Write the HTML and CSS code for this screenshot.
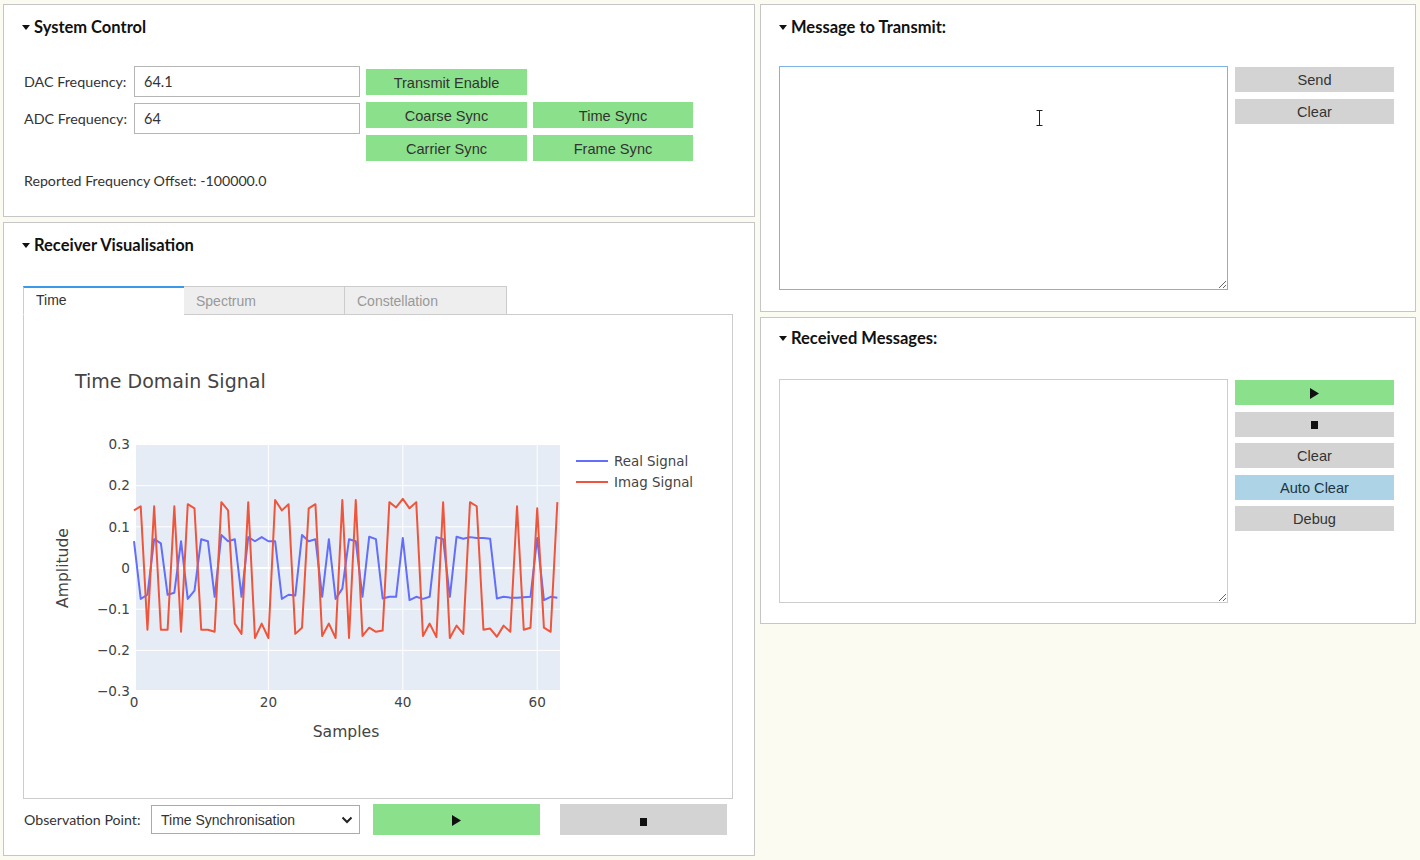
FILE: index.html
```html
<!DOCTYPE html>
<html>
<head>
<meta charset="utf-8">
<link rel="stylesheet" href="styles.css">
</head>
<body>
<div class="col left">
  <section class="panel sys">
    <h2 class="ph"><span class="tri"></span>System Control</h2>
    <div class="sys-body">
      <div class="fields">
        <label class="lbl">DAC Frequency:</label><input class="inp" value="64.1">
        <label class="lbl">ADC Frequency:</label><input class="inp" value="64">
      </div>
      <div class="btn-grid">
        <button class="btn green">Transmit Enable</button><span></span>
        <button class="btn green">Coarse Sync</button><button class="btn green">Time Sync</button>
        <button class="btn green">Carrier Sync</button><button class="btn green">Frame Sync</button>
      </div>
    </div>
    <p class="offset">Reported Frequency Offset: -100000.0</p>
  </section>

  <section class="panel recv">
    <h2 class="ph"><span class="tri"></span>Receiver Visualisation</h2>
    <div class="tabs">
      <div class="tab active">Time</div>
      <div class="tab">Spectrum</div>
      <div class="tab">Constellation</div>
    </div>
    <div class="tab-content">
      <svg class="chart" width="708" height="483" viewBox="24 315 708 483">
        <text class="c-title" x="75" y="388">Time Domain Signal</text>
        <rect x="134" y="444" width="426" height="247" fill="#e5ecf6"/>
        <g stroke="#fff" stroke-width="1">
          <line x1="268.4" y1="444" x2="268.4" y2="691"/>
          <line x1="402.8" y1="444" x2="402.8" y2="691"/>
          <line x1="537.2" y1="444" x2="537.2" y2="691"/>
          <line x1="134" y1="444.5" x2="560" y2="444.5"/>
          <line x1="134" y1="485.7" x2="560" y2="485.7"/>
          <line x1="134" y1="526.8" x2="560" y2="526.8"/>
          <line x1="134" y1="609.2" x2="560" y2="609.2"/>
          <line x1="134" y1="650.4" x2="560" y2="650.4"/>
          <line x1="134" y1="690.5" x2="560" y2="690.5"/>
          <line x1="134" y1="568" x2="560" y2="568" stroke-width="2"/>
          <line x1="135" y1="444" x2="135" y2="691" stroke-width="2"/>
        </g>
        <g transform="translate(134 568) scale(6.72 -411.7)" fill="none" stroke-width="2" stroke-linejoin="round">
          <polyline vector-effect="non-scaling-stroke" stroke="#636efa" points="0,0.065 1,-0.075 2,-0.065 3,0.07 4,0.06 5,-0.065 6,-0.06 7,0.065 8,-0.075 9,-0.055 10,0.07 11,0.065 12,-0.07 13,0.08 14,0.065 15,0.07 16,-0.07 17,0.075 18,0.065 19,0.075 20,0.065 21,0.065 22,-0.075 23,-0.065 24,-0.067 25,0.08 26,0.065 27,0.07 28,-0.07 29,0.07 30,-0.075 31,-0.05 32,0.07 33,0.065 34,-0.07 35,0.076 36,0.07 37,-0.074 38,-0.07 39,-0.07 40,0.073 41,-0.078 42,-0.07 43,-0.075 44,-0.07 45,0.075 46,0.07 47,-0.07 48,0.076 49,0.071 50,0.075 51,0.073 52,0.073 53,0.071 54,-0.074 55,-0.07 56,-0.072 57,-0.072 58,-0.071 59,-0.07 60,0.073 61,-0.078 62,-0.07 63,-0.072"/>
          <polyline vector-effect="non-scaling-stroke" stroke="#ef553b" points="0,0.14 1,0.15 2,-0.15 3,0.15 4,-0.15 5,-0.15 6,0.15 7,-0.155 8,0.155 9,0.145 10,-0.15 11,-0.15 12,-0.155 13,0.16 14,0.14 15,-0.135 16,-0.16 17,0.16 18,-0.17 19,-0.135 20,-0.17 21,0.165 22,0.14 23,0.155 24,-0.16 25,-0.145 26,0.145 27,0.155 28,-0.165 29,-0.135 30,-0.17 31,0.165 32,-0.17 33,0.165 34,-0.165 35,-0.145 36,-0.155 37,-0.152 38,0.16 39,0.147 40,0.168 41,0.145 42,0.16 43,-0.165 44,-0.135 45,-0.168 46,0.16 47,-0.17 48,-0.14 49,-0.16 50,0.16 51,0.15 52,-0.15 53,-0.147 54,-0.167 55,-0.14 56,-0.155 57,0.15 58,-0.15 59,-0.145 60,0.145 61,-0.145 62,-0.155 63,0.16"/>
        </g>
        <g class="c-tick" text-anchor="end">
          <text x="130" y="449">0.3</text>
          <text x="130" y="490">0.2</text>
          <text x="130" y="531.5">0.1</text>
          <text x="130" y="572.5">0</text>
          <text x="130" y="614">−0.1</text>
          <text x="130" y="655">−0.2</text>
          <text x="130" y="696">−0.3</text>
        </g>
        <g class="c-tick" text-anchor="middle">
          <text x="134" y="707">0</text>
          <text x="268.4" y="707">20</text>
          <text x="402.8" y="707">40</text>
          <text x="537.2" y="707">60</text>
        </g>
        <text class="c-axis" x="346" y="737" text-anchor="middle">Samples</text>
        <text class="c-axis" transform="translate(63 568) rotate(-90)" text-anchor="middle" dy="0.35em">Amplitude</text>
        <line x1="576" y1="461" x2="608" y2="461" stroke="#636efa" stroke-width="2"/>
        <line x1="576" y1="482" x2="608" y2="482" stroke="#ef553b" stroke-width="2"/>
        <text class="c-leg" x="614" y="466">Real Signal</text>
        <text class="c-leg" x="614" y="487">Imag Signal</text>
      </svg>
    </div>
    <div class="obs-row">
      <span class="lbl obs-lbl">Observation Point:</span>
      <div class="select">
        <span>Time Synchronisation</span>
        <svg width="12" height="8" viewBox="0 0 12 8"><path d="M1.5 1.5 L6 6 L10.5 1.5" fill="none" stroke="#222" stroke-width="2"/></svg>
      </div>
      <button class="btn green big play-btn"><svg width="9" height="11" viewBox="0 0 9 11"><path d="M0 0 L9 5.5 L0 11 Z" fill="#111"/></svg></button>
      <button class="btn gray big stop-btn"><svg width="7" height="8" viewBox="0 0 7 8"><rect width="7" height="8" fill="#111"/></svg></button>
    </div>
  </section>
</div>

<div class="col right">
  <section class="panel msg">
    <h2 class="ph"><span class="tri"></span>Message to Transmit:</h2>
    <div class="msg-body">
      <div class="ta-wrap">
        <textarea class="ta focus"></textarea>
        <svg class="ibeam" width="7" height="16" viewBox="0 0 7 16"><path d="M0.5 0.5 H6.5 M3.5 0.5 V15.5 M0.5 15.5 H6.5" fill="none" stroke="#222" stroke-width="1"/></svg>
      </div>
      <div class="side-btns">
        <button class="btn gray">Send</button>
        <button class="btn gray">Clear</button>
      </div>
    </div>
  </section>

  <section class="panel rmsg">
    <h2 class="ph"><span class="tri"></span>Received Messages:</h2>
    <div class="msg-body rbody">
      <textarea class="ta"></textarea>
      <div class="side-btns rbtns">
        <button class="btn green"><svg width="9" height="11" viewBox="0 0 9 11"><path d="M0 0 L9 5.5 L0 11 Z" fill="#111"/></svg></button>
        <button class="btn gray"><svg width="7" height="8" viewBox="0 0 7 8"><rect width="7" height="8" fill="#111"/></svg></button>
        <button class="btn gray">Clear</button>
        <button class="btn blue">Auto Clear</button>
        <button class="btn gray">Debug</button>
      </div>
    </div>
  </section>
</div>
</body>
</html>
```

FILE: styles.css
```css
* { box-sizing: border-box; }
html, body { margin: 0; }
body {
  width: 1420px;
  height: 860px;
  overflow: hidden;
  background: #fbfbf1;
  padding: 4px 0 0 3px;
  display: flex;
  gap: 5px;
  font-family: "Lato", "Open Sans", sans-serif;
  color: #333;
}
.col { display: flex; flex-direction: column; gap: 5px; }
.left { width: 752px; }
.right { width: 656px; }

.panel {
  background: #fff;
  border: 1px solid #c6c6c6;
  padding: 12px 0 0 18px;
}
.sys { height: 213px; }
.recv { height: 634px; }
.msg { height: 308px; }
.rmsg { height: 307px; padding-top: 10px; }

.ph {
  margin: 0;
  font: 700 16.5px/20px "Lato", "Open Sans", sans-serif;
  color: #111;
  display: flex;
  align-items: center;
  gap: 4px;
}
.tri {
  width: 0; height: 0;
  border-left: 4px solid transparent;
  border-right: 4px solid transparent;
  border-top: 5px solid #111;
}

.lbl {
  font: 400 14.3px/20px "Lato", sans-serif;
  color: #333;
}

.sys-body { display: flex; margin: 29px 0 0 2px; }
.fields {
  display: grid;
  grid-template-columns: 110px 226px;
  grid-auto-rows: 31px;
  row-gap: 6px;
  align-items: center;
}
.inp {
  height: 31px;
  width: 226px;
  border: 1px solid #b5b5b5;
  padding: 0 9px;
  font: 400 14.5px "Lato", sans-serif;
  color: #333;
  background: #fff;
  outline: none;
}
.btn-grid {
  display: grid;
  grid-template-columns: 161px 160px;
  grid-auto-rows: 26px;
  column-gap: 6px;
  row-gap: 7px;
  margin: 3px 0 0 6px;
}
.btn {
  border: none;
  margin: 0;
  padding: 1px 0 0;
  font: 400 14.6px "Liberation Sans", Arial, sans-serif;
  color: #333;
  display: flex;
  align-items: center;
  justify-content: center;
}
.green { background: #8be18b; }
.gray { background: #d3d3d3; }
.blue { background: #acd3e6; color: #234; }

.offset {
  margin: 10px 0 0 2px;
  font: 400 14.2px/20px "Lato", sans-serif;
  color: #333;
}

/* tabs */
.tabs { display: flex; margin: 31px 0 -1px 1px; position: relative; z-index: 1; }
.tab {
  height: 29px;
  padding: 4px 0 0 12px;
  font: 400 14px/20px "Liberation Sans", Arial, sans-serif;
  color: #999;
  background: #eee;
  border: 1px solid #ccc;
  border-left: none;
}
.tab:nth-child(1) { width: 161px; }
.tab:nth-child(2) { width: 161px; }
.tab:nth-child(3) { width: 162px; }
.tab.active {
  background: #fff;
  color: #333;
  border-top: 2px solid #3c98e8;
  border-left: 1px solid #ccc;
  border-right: none;
  border-bottom: 1px solid #fff;
  padding-top: 2px;
}
.tab-content {
  width: 710px;
  height: 485px;
  margin-left: 1px;
  border: 1px solid #ccc;
  background: #fff;
}
.chart { display: block; }
.c-title { font: 400 19px "DejaVu Sans", Verdana, sans-serif; fill: #444; }
.c-tick text { font: 400 13.6px "DejaVu Sans", Verdana, sans-serif; fill: #444; }
.c-leg { font: 400 13.4px "DejaVu Sans", Verdana, sans-serif; fill: #444; }
.c-axis { font: 400 15.6px "DejaVu Sans", Verdana, sans-serif; fill: #444; }

.obs-row {
  display: flex;
  align-items: center;
  height: 31px;
  margin: 5px 0 0 2px;
}
.obs-lbl { width: 127px; font-size: 14.2px; }
.select {
  width: 209px;
  height: 29px;
  border: 1px solid #aaa;
  background: #fff;
  display: flex;
  align-items: center;
  justify-content: space-between;
  padding: 0 6px 0 9px;
  font: 400 14px "Liberation Sans", Arial, sans-serif;
  color: #333;
}
.big { height: 31px; width: 167px; }
.play-btn { margin-left: 13px; }
.stop-btn { margin-left: 20px; }
.stop-btn svg { margin-top: 3px; }

/* right column */
.msg-body { display: flex; margin-top: 29px; }
.rbody { margin-top: 31px; }
.ta-wrap { position: relative; }
.ta {
  display: block;
  width: 449px;
  height: 224px;
  border: 1px solid #ccc;
  background: #fff;
  margin: 0;
  resize: both;
  outline: none;
}
.ta.focus { border-color: #7fb3e6; }
.ibeam { position: absolute; left: 257px; top: 44px; }
.side-btns {
  display: flex;
  flex-direction: column;
  gap: 7px;
  margin: 1px 0 0 7px;
}
.side-btns .btn { width: 159px; height: 25px; }
.rbtns { gap: 6.5px; }
```
